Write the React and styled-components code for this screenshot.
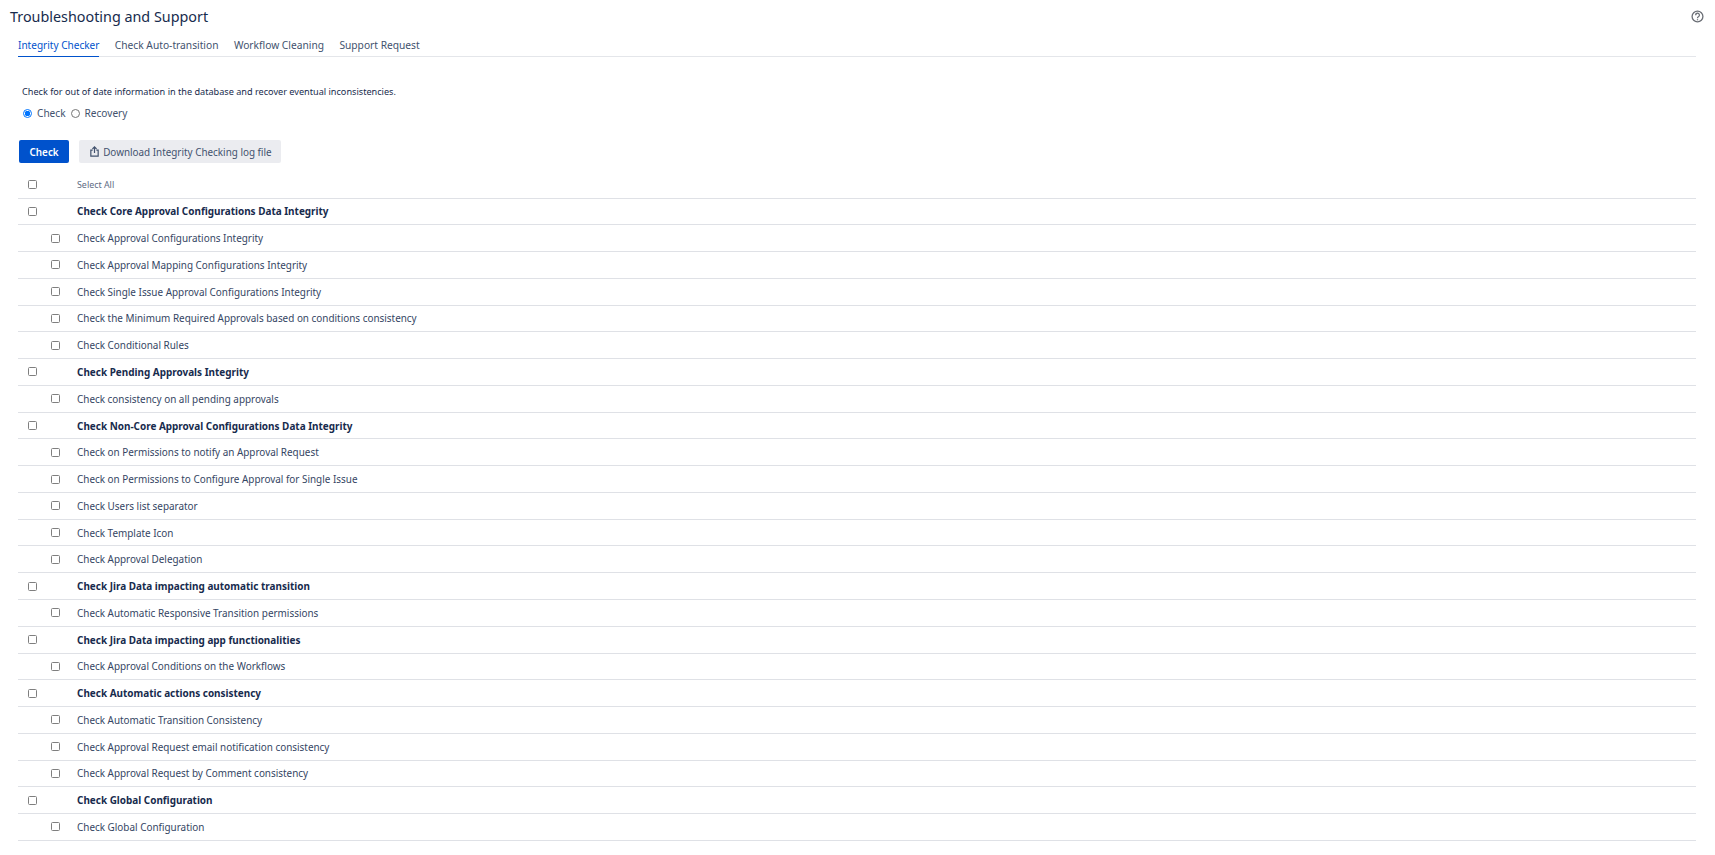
import React from 'react';
import styled, { createGlobalStyle } from 'styled-components';

const GlobalStyle = createGlobalStyle`
    html, body {
        margin: 0;
        padding: 0;
        background: #fff;
        font-family: "Noto Sans", "Open Sans", sans-serif;
        color: #172b4d;
    }
`;

const Page = styled.div`
    height: 855px;
    overflow: hidden;
    padding: 0 19px 0 18px;
    box-sizing: border-box;
`;

const Header = styled.header`
    display: flex;
    justify-content: space-between;
    align-items: flex-start;
    height: 36px;
    margin-left: -8px;
    padding-top: 6px;
    box-sizing: border-box;
`;

const Title = styled.h1`
    margin: 0;
    font-size: 14.35px;
    line-height: 22px;
    font-weight: 400;
    color: #172b4d;
`;

const HelpIcon = styled.svg`
    width: 13px;
    height: 13px;
    margin: 4px -8px 0 0;
    color: #6b6f76;
`;

const Tabs = styled.nav`
    display: flex;
    gap: 15.4px;
    height: 20px;
    border-bottom: 1px solid #e4e6ea;
`;

const Tab = styled.a`
    font-size: ${({ $active }) => ($active ? '10.05px' : '10.22px')};
    line-height: 18px;
    height: 21px;
    box-sizing: border-box;
    color: ${({ $active }) => ($active ? '#0052cc' : '#42526e')};
    border-bottom: ${({ $active }) => ($active ? '1px solid #0052cc' : 'none')};
`;

const Description = styled.p`
    margin: 28px 0 0 4px;
    font-size: 9.15px;
    line-height: 14px;
    color: #172b4d;
`;

const RadioRow = styled.div`
    display: flex;
    align-items: center;
    margin: 7px 0 0 5px;
    height: 14px;
    font-size: 10.1px;
    color: #42526e;
`;

const Radio = styled.input.attrs({ type: 'radio' })`
    appearance: none;
    width: 9px;
    height: 9px;
    margin: 0 5px 0 0;
    border-radius: 50%;
    border: 1px solid ${({ checked }) => (checked ? '#0075ff' : '#767676')};
    box-sizing: border-box;
    background: ${({ checked }) => (checked ? 'radial-gradient(circle, #0075ff 0 2.6px, #fff 3px)' : '#fff')};
`;

const RadioLabel = styled.label`
    margin-right: 5px;
`;

const Actions = styled.div`
    display: flex;
    gap: 9.5px;
    margin: 20px 0 0 1px;
`;

const Button = styled.button`
    display: flex;
    align-items: center;
    height: 23px;
    border: none;
    border-radius: 2px;
    font-family: inherit;
    font-size: 9.9px;
    padding: ${({ $primary }) => ($primary ? '0 10.5px' : '0 9px 0 10px')};
    background: ${({ $primary }) => ($primary ? '#0052cc' : '#ebecf0')};
    color: ${({ $primary }) => ($primary ? '#fff' : '#42526e')};
    font-weight: ${({ $primary }) => ($primary ? 600 : 400)};
`;

const ButtonIcon = styled.svg`
    width: 11px;
    height: 13px;
    margin-right: 3.5px;
`;

const List = styled.div`
    margin-top: 8px;
`;

const Row = styled.div`
    display: grid;
    grid-template-columns: 59px 1fr;
    align-items: center;
    height: ${({ $head }) => ($head ? '27.5px' : '26.78px')};
    box-sizing: border-box;
    border-bottom: 1px solid #dfe1e6;
`;

const CheckCell = styled.div`
    padding-left: ${({ $child }) => ($child ? '33px' : '10px')};
    display: flex;
`;

const Check = styled.input.attrs({ type: 'checkbox' })`
    appearance: none;
    width: 9px;
    height: 9px;
    margin: 0;
    box-sizing: border-box;
    border: 1px solid #7f7f7f;
    border-radius: 1.5px;
    background: #fff;
`;

const RowText = styled.span`
    font-size: ${({ $head, $bold }) => ($head ? '8.9px' : $bold ? '9.95px' : '9.92px')};
    font-weight: ${({ $bold }) => ($bold ? 700 : 400)};
    color: ${({ $head, $bold }) => ($head ? '#5e6c84' : $bold ? '#172b4d' : '#344563')};
`;

const tabs = ['Integrity Checker', 'Check Auto-transition', 'Workflow Cleaning', 'Support Request'];

const rows = [
    ['Check Core Approval Configurations Data Integrity', true],
    ['Check Approval Configurations Integrity'],
    ['Check Approval Mapping Configurations Integrity'],
    ['Check Single Issue Approval Configurations Integrity'],
    ['Check the Minimum Required Approvals based on conditions consistency'],
    ['Check Conditional Rules'],
    ['Check Pending Approvals Integrity', true],
    ['Check consistency on all pending approvals'],
    ['Check Non-Core Approval Configurations Data Integrity', true],
    ['Check on Permissions to notify an Approval Request'],
    ['Check on Permissions to Configure Approval for Single Issue'],
    ['Check Users list separator'],
    ['Check Template Icon'],
    ['Check Approval Delegation'],
    ['Check Jira Data impacting automatic transition', true],
    ['Check Automatic Responsive Transition permissions'],
    ['Check Jira Data impacting app functionalities', true],
    ['Check Approval Conditions on the Workflows'],
    ['Check Automatic actions consistency', true],
    ['Check Automatic Transition Consistency'],
    ['Check Approval Request email notification consistency'],
    ['Check Approval Request by Comment consistency'],
    ['Check Global Configuration', true],
    ['Check Global Configuration'],
];

const App = () => {
    return (
        <Page>
            <GlobalStyle />
            <Header>
                <Title>Troubleshooting and Support</Title>
                <HelpIcon viewBox="0 0 24 24" fill="none" stroke="currentColor" strokeWidth="2.4">
                    <circle cx="12" cy="12" r="10" />
                    <path d="M8.5 9.5a3.5 3.5 0 1 1 5.2 3c-1.2.7-1.7 1.3-1.7 2.5" />
                    <path d="M12 17v2" />
                </HelpIcon>
            </Header>
            <Tabs>
                {tabs.map((t, i) => (
                    <Tab key={t} $active={i === 0}>{t}</Tab>
                ))}
            </Tabs>
            <Description>Check for out of date information in the database and recover eventual inconsistencies.</Description>
            <RadioRow>
                <Radio name="mode" checked readOnly />
                <RadioLabel>Check</RadioLabel>
                <Radio name="mode" checked={false} readOnly />
                <RadioLabel>Recovery</RadioLabel>
            </RadioRow>
            <Actions>
                <Button $primary>Check</Button>
                <Button>
                    <ButtonIcon viewBox="0 0 24 26" fill="none" stroke="#42526e" strokeWidth="2.6">
                        <path d="M8 10H4v13h16V10h-4" />
                        <path d="M12 16V3M7.5 7.5 12 3l4.5 4.5" />
                    </ButtonIcon>
                    Download Integrity Checking log file
                </Button>
            </Actions>
            <List>
                <Row $head>
                    <CheckCell><Check /></CheckCell>
                    <RowText $head>Select All</RowText>
                </Row>
                {rows.map(([label, bold], i) => (
                    <Row key={i}>
                        <CheckCell $child={!bold}><Check /></CheckCell>
                        <RowText $bold={bold}>{label}</RowText>
                    </Row>
                ))}
            </List>
        </Page>
    );
};

export default App;
